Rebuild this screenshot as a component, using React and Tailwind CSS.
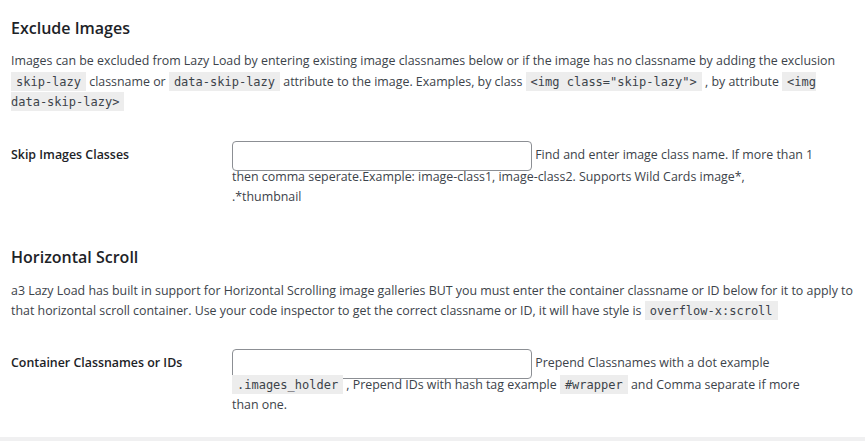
import React from 'react';

const Code = ({ children }) => (
  <code className="bg-[#ededed] px-[5px] pt-[3px] pb-[2px] text-[12px] font-['DejaVu_Sans_Mono',monospace] text-[#3c434a]">
    {children}
  </code>
);

function SettingRow({ label, children }) {
  return (
    <div className="flex">
      <div className="w-[221px] shrink-0 pt-[20px] pb-[20px] pr-[10px] text-[12.4px] leading-[20.5px] font-semibold text-[#1d2327]">
        {label}
      </div>
      <div className="flex-1 pt-[20px] pb-[15px] pr-[10px] text-[12.4px] leading-[20.5px] text-[#3c434a]">
        <input
          type="text"
          className="inline-block w-[300px] h-[30px] -my-[4px] align-middle border border-[#8c8f94] rounded-[4px] bg-white"
        />{' '}
        {children}
      </div>
    </div>
  );
}

export default function App() {
  return (
    <div className="w-[865px] h-[441px] bg-[#f0f0f1] font-['Open_Sans',sans-serif]">
      <div className="h-[437px] bg-white px-[11px] pt-[17px]">
        <h3 className="text-[16px] leading-[22px] font-semibold text-[#1d2327]">Exclude Images</h3>
        <p className="mt-[12px] text-[12.4px] leading-[20.5px] text-[#3c434a]">
          Images can be excluded from Lazy Load by entering existing image classnames below or if the image has no classname by adding the exclusion
          <br />
          <Code>skip-lazy</Code> classname or <Code>data-skip-lazy</Code> attribute to the image. Examples, by class{' '}
          <Code>&lt;img class="skip-lazy"&gt;</Code> , by attribute{' '}
          <Code>
            &lt;img
            <br />
            data-skip-lazy&gt;
          </Code>
        </p>

        <div className="mt-[12px]">
          <SettingRow label="Skip Images Classes">
            Find and enter image class name. If more than 1
            <br />
            then comma seperate.Example: image-class1, image-class2. Supports Wild Cards image*,
            <br />
            .*thumbnail
          </SettingRow>
        </div>

        <h3 className="mt-[23px] text-[16px] leading-[22px] font-semibold text-[#1d2327]">Horizontal Scroll</h3>
        <p className="mt-[13px] text-[12.4px] leading-[20.5px] text-[#3c434a]">
          a3 Lazy Load has built in support for Horizontal Scrolling image galleries BUT you must enter the container classname or ID below for it to apply to
          <br />
          that horizontal scroll container. Use your code inspector to get the correct classname or ID, it will have style is <Code>overflow-x:scroll</Code>
        </p>

        <div className="mt-[11px]">
          <SettingRow label="Container Classnames or IDs">
            Prepend Classnames with a dot example
            <br />
            <Code>.images_holder</Code> , Prepend IDs with hash tag example <Code>#wrapper</Code> and Comma separate if more
            <br />
            than one.
          </SettingRow>
        </div>
      </div>
    </div>
  );
}
